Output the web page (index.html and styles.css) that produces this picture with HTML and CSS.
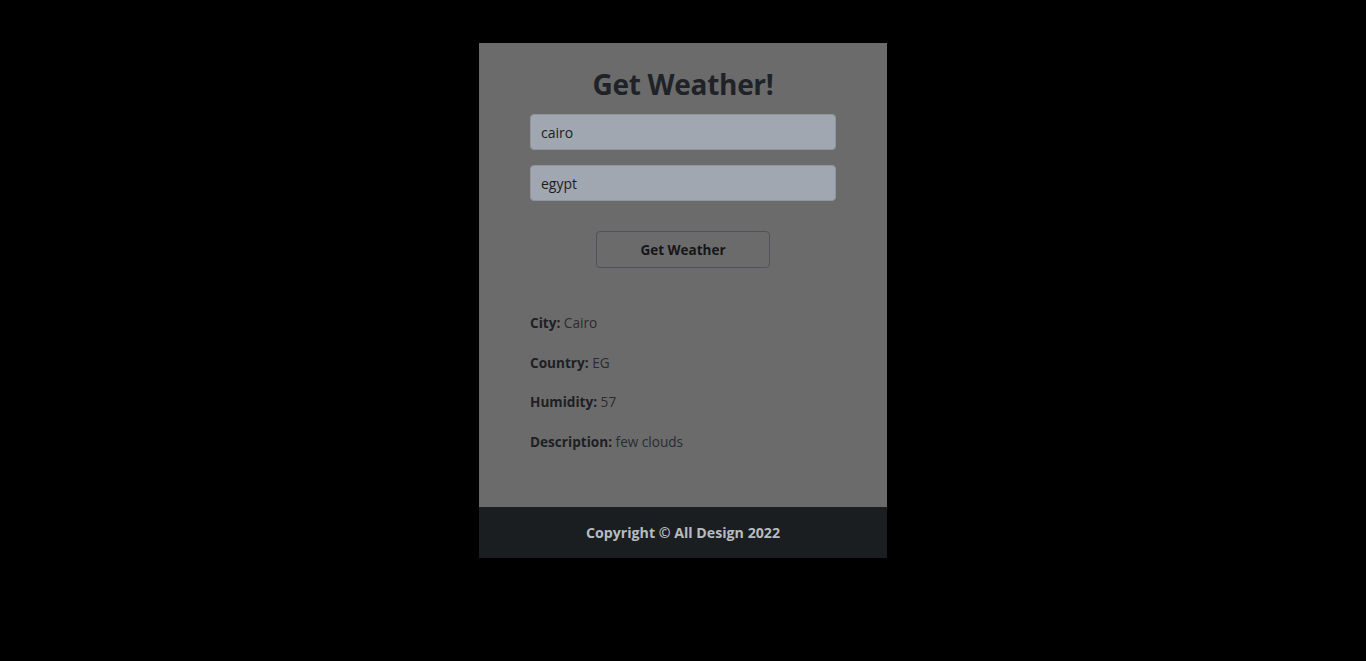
FILE: index.html
```html
<!DOCTYPE html>
<html>
<head>
<meta charset="utf-8">
<link rel="stylesheet" href="styles.css">
</head>
<body>
<div class="page">
  <div class="card">
    <main class="content">
      <h1 class="title">Get Weather!</h1>
      <form class="form">
        <input class="field" type="text" value="cairo">
        <input class="field" type="text" value="egypt">
        <button class="btn" type="button">Get Weather</button>
      </form>
      <div class="info">
        <p class="row"><b>City:</b> Cairo</p>
        <p class="row"><b>Country:</b> EG</p>
        <p class="row"><b>Humidity:</b> 57</p>
        <p class="row"><b>Description:</b> few clouds</p>
      </div>
    </main>
    <footer class="footer">Copyright © All Design 2022</footer>
  </div>
</div>
</body>
</html>
```
FILE: styles.css
```css
html, body {
  margin: 0;
  padding: 0;
  background: #000;
  height: 100%;
}
body {
  font-family: "Open Sans", "Noto Sans", sans-serif;
  color: #212529;
}
.page {
  display: flex;
  justify-content: center;
  padding-top: 43px;
}
.card {
  width: 408px;
  display: flex;
  flex-direction: column;
}
.content {
  background: #6b6b6b;
  height: 464px;
  box-sizing: border-box;
  padding: 21px 51px 0;
  display: flex;
  flex-direction: column;
}
.title {
  margin: 0;
  text-align: center;
  font-size: 28px;
  font-weight: 700;
  line-height: 40px;
  color: #1f2327;
  letter-spacing: -0.3px;
}
.form {
  display: flex;
  flex-direction: column;
  align-items: center;
  margin-top: 10px;
}
.field {
  box-sizing: border-box;
  width: 306px;
  height: 36px;
  margin-bottom: 15px;
  padding: 0 10px;
  background: #a1a7b0;
  border: 1px solid #8f959d;
  border-radius: 4px;
  font-family: inherit;
  font-size: 14px;
  color: #1a1d20;
  outline: none;
}
.btn {
  box-sizing: border-box;
  margin-top: 15px;
  width: 174px;
  height: 37px;
  background: transparent;
  border: 1px solid #4f5257;
  border-radius: 4px;
  font-family: inherit;
  font-weight: 700;
  font-size: 13.5px;
  color: #141619;
}
.info {
  margin-top: 45px;
  display: flex;
  flex-direction: column;
  gap: 19.7px;
}
.row {
  margin: 0;
  font-size: 13.6px;
  line-height: 20px;
  color: #2a2c30;
}
.row b {
  color: #1d2024;
}
.footer {
  background: #1b1e21;
  height: 51px;
  display: flex;
  align-items: center;
  justify-content: center;
  color: #b7bbbf;
  font-weight: 700;
  font-size: 14.2px;
}
```
